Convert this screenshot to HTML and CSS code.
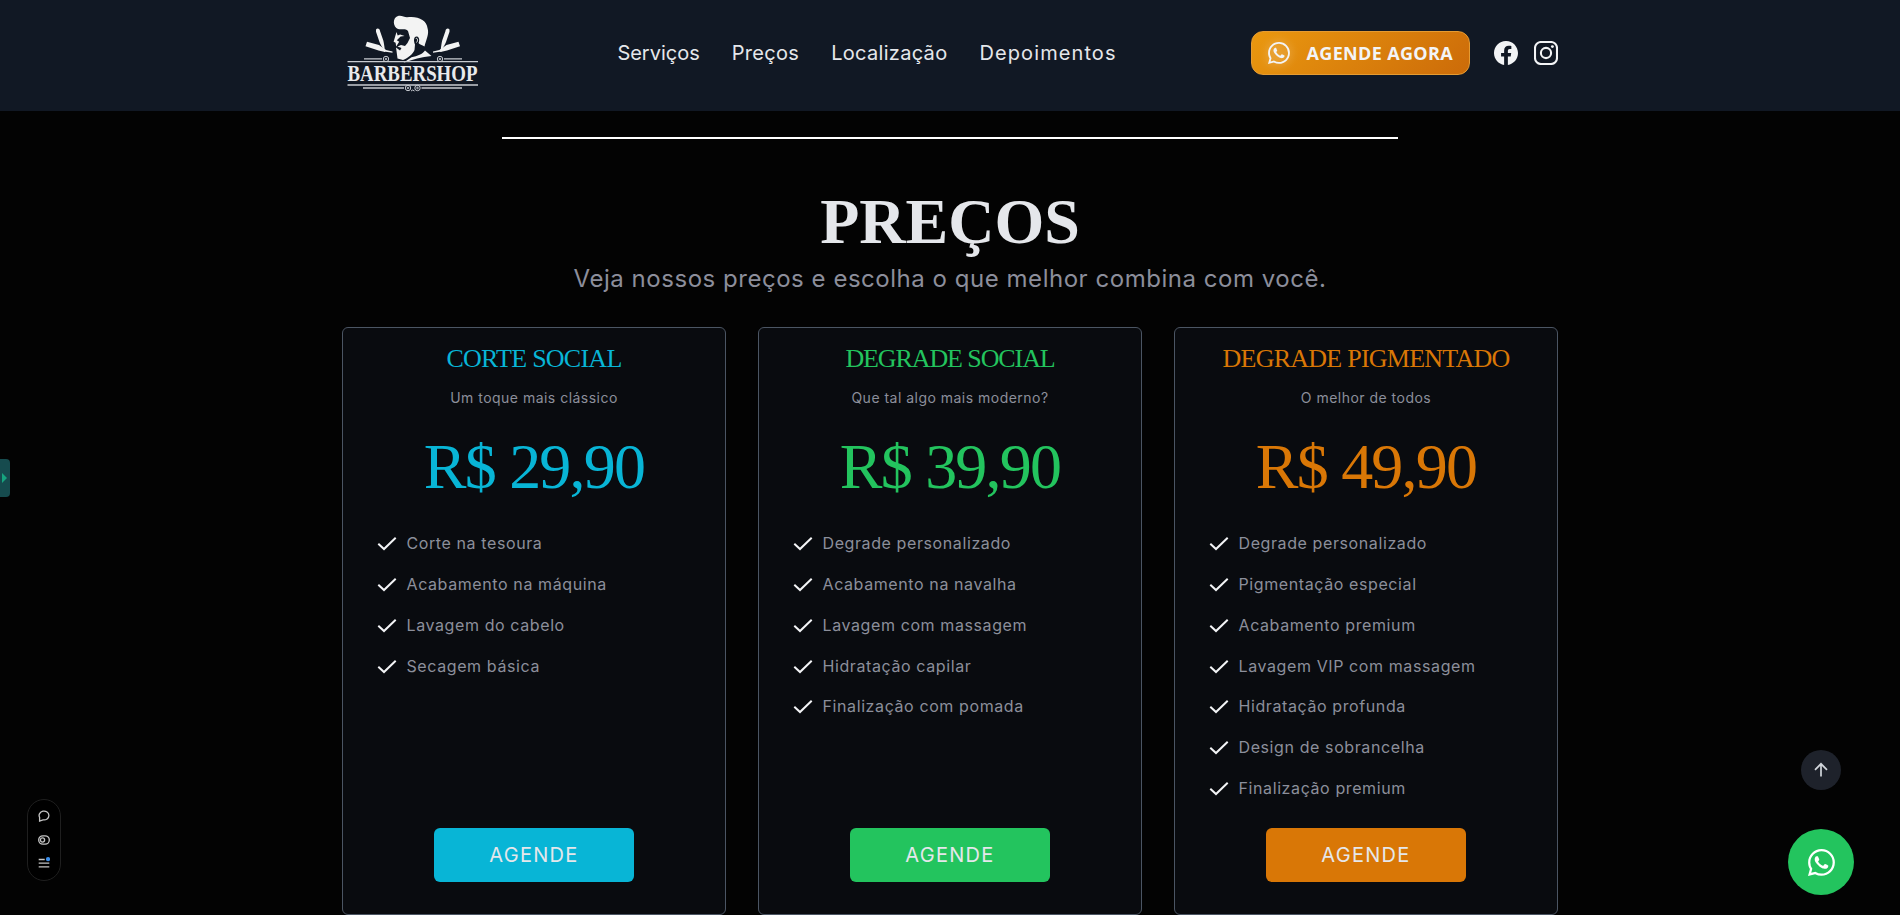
FILE: index.html
```html
<!DOCTYPE html>
<html lang="pt-BR">
<head>
<meta charset="utf-8">
<title>Barbershop</title>
<link rel="stylesheet" href="styles.css">
</head>
<body>
<svg class="defs" aria-hidden="true">
  <symbol id="whatsapp" viewBox="0 0 16 16"><path fill="currentColor" d="M13.601 2.326A7.85 7.85 0 0 0 7.994 0C3.627 0 .068 3.558.064 7.926c0 1.399.366 2.76 1.057 3.965L0 16l4.204-1.102a7.9 7.9 0 0 0 3.79.965h.004c4.368 0 7.926-3.558 7.93-7.93A7.9 7.9 0 0 0 13.6 2.326zM7.994 14.521a6.6 6.6 0 0 1-3.356-.92l-.24-.144-2.494.654.666-2.433-.156-.251a6.56 6.56 0 0 1-1.007-3.505c0-3.626 2.957-6.584 6.591-6.584a6.56 6.56 0 0 1 4.66 1.931 6.56 6.56 0 0 1 1.928 4.66c-.004 3.639-2.961 6.592-6.592 6.592m3.615-4.934c-.197-.099-1.17-.578-1.353-.646-.182-.065-.315-.099-.445.099-.133.197-.513.646-.627.775-.114.133-.232.148-.43.05-.197-.1-.836-.308-1.592-.985-.59-.525-.985-1.175-1.103-1.372-.114-.198-.011-.304.088-.403.087-.088.197-.232.296-.346.1-.114.133-.198.198-.33.065-.134.034-.248-.015-.347-.05-.099-.445-1.076-.612-1.47-.16-.389-.323-.335-.445-.34-.114-.007-.247-.007-.38-.007a.73.73 0 0 0-.529.247c-.182.198-.691.677-.691 1.654s.71 1.916.81 2.049c.098.133 1.394 2.132 3.383 2.992.47.205.84.326 1.129.418.475.152.904.129 1.246.08.38-.058 1.171-.48 1.338-.943.164-.464.164-.86.114-.993z"/></symbol>
  <symbol id="check" viewBox="0 0 24 24"><path fill="none" stroke="currentColor" stroke-width="2" d="M20.7 5.7 9 17l-5.700-5.300"/></symbol>
</svg>

<header class="topbar">
  <div class="topbar-inner">
    <svg class="logo" width="144" height="110" viewBox="342 0 144 110">
      <g fill="#f3f3f3">
        <path d="M398 29C393 27 392 18 398 16C401 14.800 404 17 407 17.300C417 15.500 427 20 427.500 28C429.500 34 426 40 424.500 46.500C422 45 419.500 44.500 418.500 43C420 40 419 37 417 36.500C413.500 36 413.500 41 415 44.500L414.500 50C413 54 408 58 403 60L397.500 58.500L396.500 51L396 47.500L400 50.500L401.500 48L397.500 46.500L401 45L405 46L407.500 43L410 38L408 31C405 28 402 30 398 29Z"/>
        <path d="m403.500 62.700 8-5.500c6-1 11-3 13.500-6.700l6.500 5.500c-10 1-19 3.500-28 6.700Z"/>
        <path d="m396.500 32-2.900 9.700 2 1 .6 3.800 1.700-2.800 1.300-2-2.400-1.500 3.800-3.700 4-.5-4.500-1.500-2.400 1Z"/>
        <g id="razor">
          <path d="M376 29.500c1.500-1.800 4-.6 4 1.500l3.300 9.500c.5 2 1.200 6 1.500 9.500h-1c-1.700-3-3.500-6-4.300-8l-3.500-10.200Z"/>
          <path d="M367 41.700 379 45l7 5-1 2-6.500-1.500-13-4.200Z"/>
          <path d="m384 49.500 8.500 2v1.200l-8.500-1.200Z"/>
        </g>
        <use href="#razor" transform="translate(825.500 0) scale(-1 1)"/>
      </g>
      <path d="M415.800 38.500c2-1 2.300 2.500.7 4" fill="none" stroke="#f3f3f3"/>
      <g fill="none" stroke="#c7cad0">
        <path stroke-width="1.300" d="M347.500 61.700h130.500M364 58.900h18M444 58.900h18M347.500 85h130.500M363 88h41M421.500 88h40.500"/>
        <circle cx="386" cy="59" r="2.700"/><circle cx="386" cy="59" r=".8"/>
        <circle cx="440" cy="59" r="2.700"/><circle cx="440" cy="59" r=".8"/>
        <circle cx="408" cy="88" r="2.700"/><circle cx="408" cy="88" r=".8"/>
        <circle cx="417.500" cy="88" r="2.700"/><circle cx="417.500" cy="88" r=".8"/>
        <path d="m411 91 1.700-1 1.800 1"/>
      </g>
      <text class="logo-text" x="347.500" y="81" textLength="130" lengthAdjust="spacingAndGlyphs">BARBERSHOP</text>
    </svg>
    <nav class="nav">
      <a>Serviços</a><a class="spaced">Preços</a><a class="spaced">Localização</a><a class="wide">Depoimentos</a>
    </nav>
    <div class="actions">
      <a class="cta"><svg class="cta-icon"><use href="#whatsapp"/></svg><span>AGENDE AGORA</span></a>
      <svg class="social" viewBox="0 0 16 16"><path fill="currentColor" d="M16 8.049c0-4.446-3.582-8.050-8-8.050C3.580 0-.002 3.603-.002 8.050c0 4.017 2.926 7.347 6.750 7.951v-5.625h-2.030V8.050H6.750V6.275c0-2.017 1.195-3.131 3.022-3.131.876 0 1.791.157 1.791.157v1.980h-1.009c-.993 0-1.303.621-1.303 1.258v1.510h2.218l-.354 2.326H9.250V16c3.824-.604 6.750-3.934 6.750-7.951z"/></svg>
      <svg class="social" viewBox="0 0 24 24"><rect x="1" y="1" width="22" height="22" rx="6" fill="none" stroke="currentColor" stroke-width="2.100"/><circle cx="12" cy="12" r="5.100" fill="none" stroke="currentColor" stroke-width="2.100"/><circle cx="18.400" cy="5.600" r="1.450" fill="currentColor"/></svg>
    </div>
  </div>
</header>

<main class="pricing">
  <hr class="rule">
  <h1>PREÇOS</h1>
  <p class="lead">Veja nossos preços e escolha o que melhor combina com você.</p>
  <div class="cards">
    <section class="card cyan">
      <h2>CORTE SOCIAL</h2>
      <p class="tagline">Um toque mais clássico</p>
      <p class="price">R$ 29,90</p>
      <ul>
        <li><svg><use href="#check"/></svg>Corte na tesoura</li>
        <li><svg><use href="#check"/></svg>Acabamento na máquina</li>
        <li><svg><use href="#check"/></svg>Lavagem do cabelo</li>
        <li><svg><use href="#check"/></svg>Secagem básica</li>
      </ul>
      <a class="book">AGENDE</a>
    </section>
    <section class="card green">
      <h2>DEGRADE SOCIAL</h2>
      <p class="tagline">Que tal algo mais moderno?</p>
      <p class="price">R$ 39,90</p>
      <ul>
        <li><svg><use href="#check"/></svg>Degrade personalizado</li>
        <li><svg><use href="#check"/></svg>Acabamento na navalha</li>
        <li><svg><use href="#check"/></svg>Lavagem com massagem</li>
        <li><svg><use href="#check"/></svg>Hidratação capilar</li>
        <li><svg><use href="#check"/></svg>Finalização com pomada</li>
      </ul>
      <a class="book">AGENDE</a>
    </section>
    <section class="card amber">
      <h2>DEGRADE PIGMENTADO</h2>
      <p class="tagline">O melhor de todos</p>
      <p class="price">R$ 49,90</p>
      <ul>
        <li><svg><use href="#check"/></svg>Degrade personalizado</li>
        <li><svg><use href="#check"/></svg>Pigmentação especial</li>
        <li><svg><use href="#check"/></svg>Acabamento premium</li>
        <li><svg><use href="#check"/></svg>Lavagem VIP com massagem</li>
        <li><svg><use href="#check"/></svg>Hidratação profunda</li>
        <li><svg><use href="#check"/></svg>Design de sobrancelha</li>
        <li><svg><use href="#check"/></svg>Finalização premium</li>
      </ul>
      <a class="book">AGENDE</a>
    </section>
  </div>
</main>

<div class="side-tab"></div>
<div class="tools">
  <svg viewBox="0 0 12 12"><path d="M1.600 11V7.400A4.900 4.400 0 1 1 5 9.800Z"/></svg>
  <svg viewBox="0 0 12 12"><rect x=".7" y="1.800" width="10.600" height="8.400" rx="4.200"/><circle cx="4.500" cy="6" r="2.100"/></svg>
  <svg viewBox="0 0 12 12"><path d="M.7 2.500h6M.7 6.200h10.600M.7 9.900h10.600"/><circle class="dot" cx="10" cy="2.200" r="2.100"/></svg>
</div>
<a class="to-top"><svg viewBox="0 0 16 16"><path d="M8 14.500V2M2 7.800l6-6 6 6"/></svg></a>
<a class="chat"><svg><use href="#whatsapp"/></svg></a>
</body>
</html>
```

FILE: styles.css
```css
* { box-sizing: border-box; margin: 0; padding: 0; }
body { height: 915px; overflow: hidden; background: #030303; color: #e5e7eb; font-family: Inter, "Noto Sans", sans-serif; }
.defs { position: absolute; width: 0; height: 0; }

.topbar { height: 111px; background: #111824; }
.topbar-inner { width: 1216px; height: 106px; margin: 0 auto; display: flex; justify-content: space-between; align-items: center; }
.logo { flex: none; align-self: flex-start; overflow: visible; }
.logo-text { font: bold 22.500px "Liberation Serif", serif; fill: #e9eaec; }
.nav { display: flex; gap: 32px; font-size: 20px; line-height: 28px; margin-left: -3px; }
.nav .spaced { letter-spacing: .3px; }
.nav .wide { letter-spacing: 1.100px; }
.actions { display: flex; align-items: center; gap: 16px; color: #f3f4f6; }
.cta { width: 219px; height: 44px; margin-right: 8px; padding-left: 16px; display: flex; align-items: center; gap: 16.500px; border: 1px solid #e59b32; border-radius: 12px; background: linear-gradient(135deg, #ea980f, #cc6b09); font: bold 18px "Open Sans", sans-serif; letter-spacing: .35px; white-space: nowrap; }
.cta-icon { width: 22px; height: 22px; flex: none; filter: drop-shadow(0 0 5px #ffffff80); }
.social { width: 24px; height: 24px; flex: none; }

.pricing { display: flex; flex-direction: column; align-items: center; padding-top: 26px; }
.rule { width: 896px; height: 2px; border: 0; background: #fff; }
h1 { margin-top: 47px; font: bold 64px/72px "Liberation Serif", serif; letter-spacing: 0; }
.lead { margin-top: 5px; font-size: 24px; line-height: 32px; letter-spacing: .53px; color: #8c8e9b; }
.cards { display: grid; grid-template-columns: repeat(3, 384px); gap: 32px; margin-top: 32px; }
.card { height: 588px; padding: 13px 31px 32px; display: flex; flex-direction: column; align-items: center; border: 1px solid #4b5563; border-radius: 6px; background: #090b0f; color: #8c8f9b; }
.card h2 { font: 26px/36px "Liberation Serif", serif; letter-spacing: -.75px; color: var(--accent); white-space: nowrap; }
.green h2 { letter-spacing: -1.100px; }
.tagline { margin-top: 11px; font-size: 14px; line-height: 20px; letter-spacing: .48px; }
.price { margin-top: 27px; font: 64px/64px "Liberation Serif", serif; letter-spacing: -1.800px; color: var(--accent); }
.card ul { width: 100%; margin-top: 32px; padding-left: 1px; list-style: none; display: grid; gap: 16.850px; }
.card li { display: flex; align-items: center; gap: 7.500px; height: 24px; font-size: 16px; letter-spacing: .6px; }
.card li svg { width: 24px; height: 24px; margin-top: 2px; color: #f3f4f6; }
.book { width: 200px; height: 54px; margin-top: auto; border-radius: 6px; background: var(--accent); color: #e5e7eb; font-size: 20px; line-height: 54px; letter-spacing: 1.300px; text-align: center; }
.cyan { --accent: #08b5d6; }
.green { --accent: #23c45e; }
.amber { --accent: #d97706; }

.side-tab { position: fixed; left: 0; top: 459px; width: 10px; height: 38px; border-radius: 0 4px 4px 0; background: #164b4e; }
.side-tab::before { content: ""; position: absolute; left: 2px; top: 14px; border: 5px solid transparent; border-left-color: #16a47f; border-right: 0; }
.tools { position: fixed; left: 27px; top: 799px; width: 34px; height: 82px; padding: 10px 0 11px; display: flex; flex-direction: column; align-items: center; justify-content: space-between; border: 1px solid #1f1f1f; border-radius: 17px; background: #000; }
.tools svg { width: 12px; height: 12px; fill: none; stroke: #c4c4c4; stroke-width: 1.300; }
.tools .dot { fill: #3b8eea; stroke: none; }
.to-top, .chat { position: fixed; display: grid; place-items: center; border-radius: 50%; }
.to-top { left: 1801px; top: 750px; width: 40px; height: 40px; background: #1e222b; }
.to-top svg { width: 16px; height: 16px; fill: none; stroke: #d1d5db; stroke-width: 1.700; }
.chat { left: 1788px; top: 829px; width: 66px; height: 66px; background: #23c45e; color: #fff; }
.chat svg { width: 27px; height: 27px; }
```
